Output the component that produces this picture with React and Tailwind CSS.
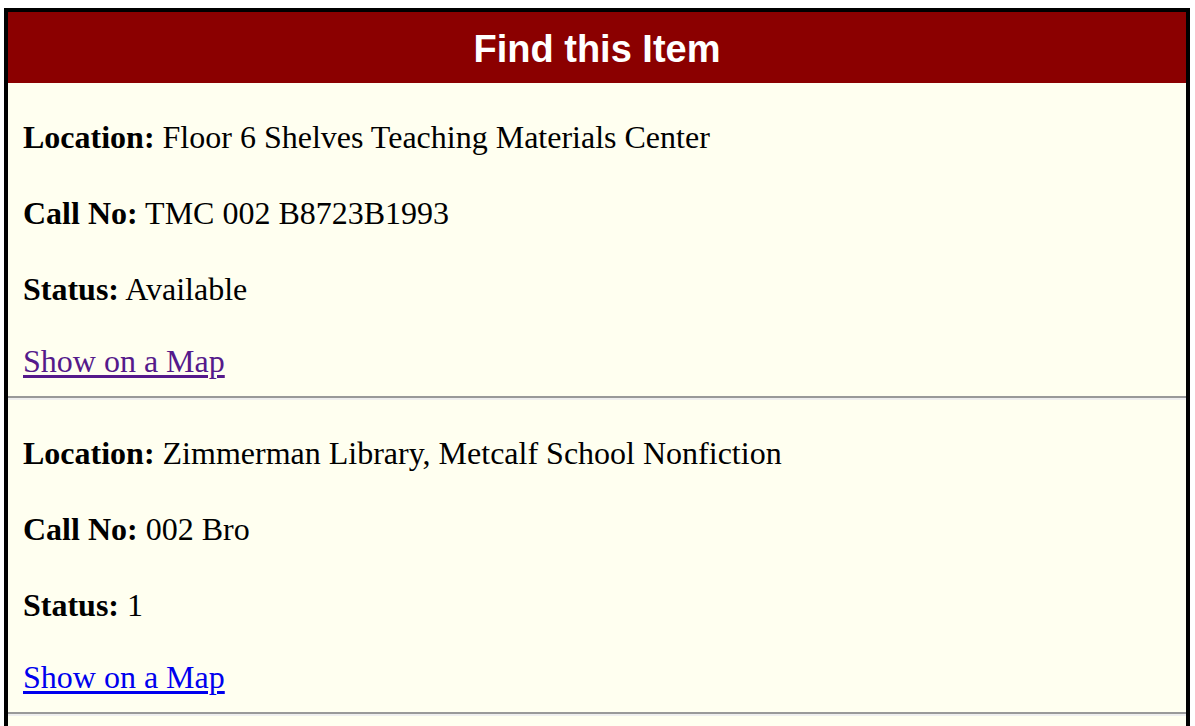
import React from "react";

const serif = { fontFamily: '"Liberation Serif", "Times New Roman", serif' };

function Row({ label, value, className = "" }) {
  return (
    <p className={"text-[32px] leading-[36px] text-black " + className}>
      <b>{label}</b> {value}
    </p>
  );
}

function Section({ location, call, status, visited, top }) {
  return (
    <div>
      <div className={"pl-[15px] pb-[17px] " + top} style={serif}>
        <Row label="Location:" value={location} />
        <Row label="Call No:" value={call} className="mt-[40px]" />
        <Row label="Status:" value={status} className="mt-[40px]" />
        <p className="mt-[36px] text-[32px] leading-[36px]">
          <a
            href="#"
            className={
              "underline underline-offset-[3px] " +
              (visited ? "text-[#551a8b]" : "text-[#0000ee]")
            }
          >
            Show on a Map
          </a>
        </p>
      </div>
      <div className="h-[2px] bg-[#999999]" />
      <div className="h-[2px] bg-[#eeeeee]" />
    </div>
  );
}

export default function App() {
  return (
    <div className="min-h-screen bg-white pt-[8px] pl-[4px]">
      <div className="w-[1186px] border-4 border-black bg-[#fffff0] min-h-[760px]">
        <div className="h-[71px] bg-[#8b0000] flex items-center justify-center">
          <h1
            className="text-[38px] font-bold text-white leading-none pt-[2px]"
            style={{ fontFamily: '"Liberation Sans", Arial, sans-serif' }}
          >
            Find this Item
          </h1>
        </div>
        <Section
          location="Floor 6 Shelves Teaching Materials Center"
          call="TMC 002 B8723B1993"
          status="Available"
          visited
          top="pt-[36px]"
        />
        <Section
          location="Zimmerman Library, Metcalf School Nonfiction"
          call="002 Bro"
          status="1"
          top="pt-[35px]"
        />
      </div>
    </div>
  );
}
